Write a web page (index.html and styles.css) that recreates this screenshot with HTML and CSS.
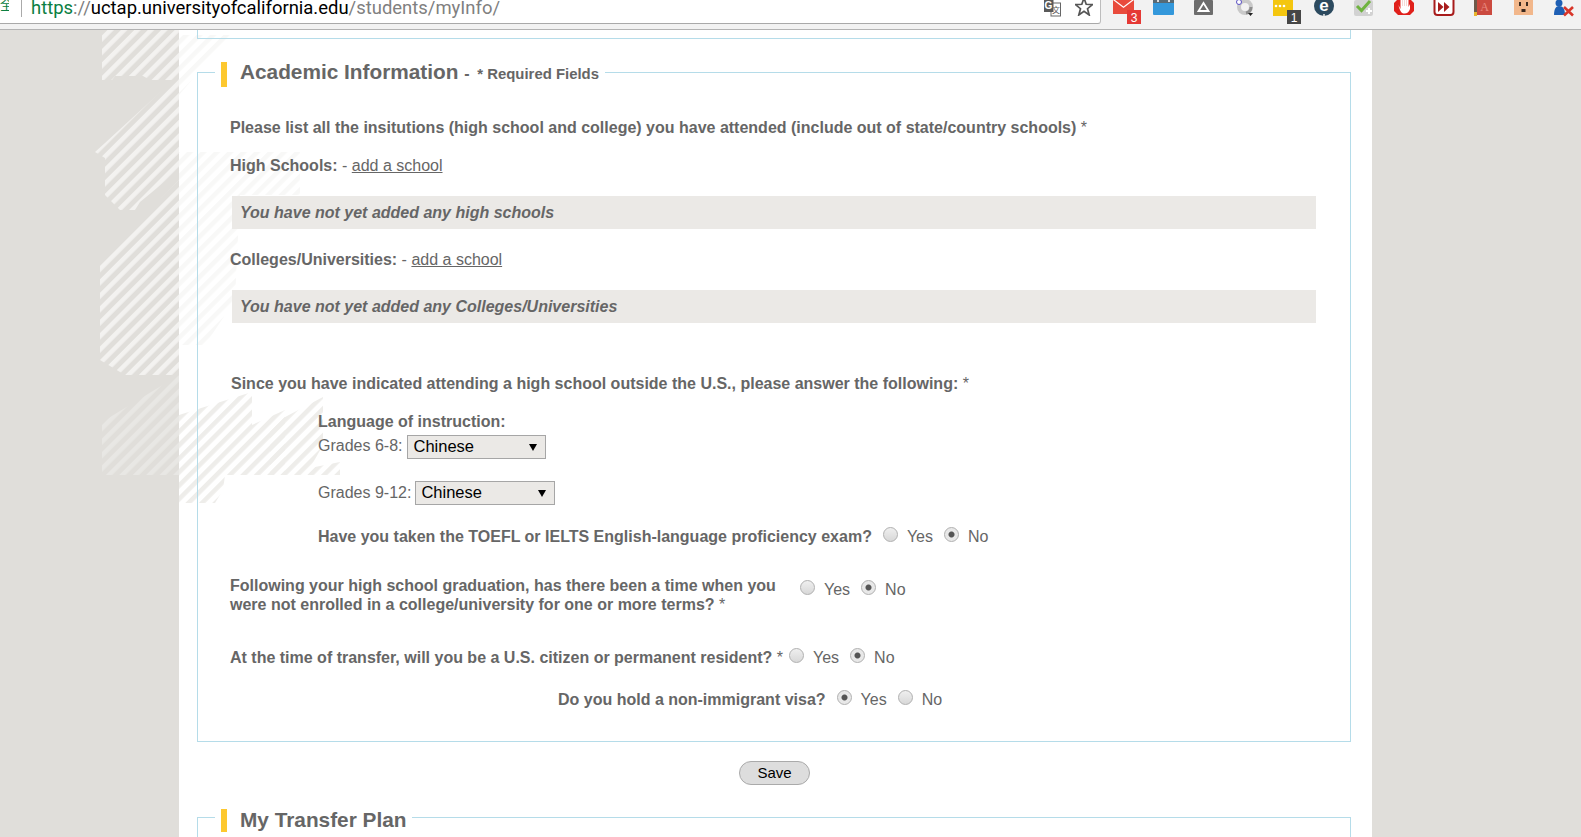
FILE: index.html
```html
<!DOCTYPE html>
<html lang="en">

<head>
    <meta charset="UTF-8">
    <title>My Information - UC TAP</title>
    <link rel="stylesheet" href="styles.css">
</head>

<body>
    <div class="toolbar">
        <div class="address">
            <span class="secure">全</span>
            <span class="divider"></span>
            <span class="url"><span class="scheme">https</span><span class="path">://</span><span class="host">uctap.universityofcalifornia.edu</span><span class="path">/students/myInfo/</span></span>
            <svg class="addr-icon translate" viewBox="0 0 18 17">
                <rect x="8" y="3" width="9.5" height="13" fill="#fff" stroke="#666"/>
                <text x="13" y="13" class="t-z">文</text>
                <path d="M1 0H10.500V12H1Z" fill="#5a5a5a"/>
                <text x="5.500" y="9" class="t-g">G</text>
            </svg>
            <svg class="addr-icon star" viewBox="0 0 18 16">
                <path d="M9 -2 11.200 4.300 17.500 4.600 12.500 8.700 14.200 15 9 11.400 3.800 15 5.500 8.700 0.500 4.600 6.800 4.300Z" fill="none" stroke="#555" stroke-width="1.700"/>
            </svg>
        </div>
        <div class="ext-icons">
            <svg class="ext" viewBox="0 0 40 29">
                <path d="M9 0H30V14H9Z" fill="#e94b3c"/>
                <path d="M9 0 19.500 8 30 0" fill="#fff"/>
                <path d="M11 0 19.500 6.500 28 0Z" fill="#e94b3c"/>
                <rect x="23" y="10" width="14" height="14" fill="#e53935"/>
                <text x="30" y="22" class="t-badge">3</text>
            </svg>
            <svg class="ext" viewBox="0 0 40 29">
                <rect x="9" y="0" width="21" height="15" rx="1" fill="#3498db"/>
                <rect x="9" y="0" width="21" height="3" fill="#566a76"/>
                <rect x="13" y="0" width="2" height="2" fill="#ddd"/>
                <rect x="24" y="0" width="2" height="2" fill="#ddd"/>
            </svg>
            <svg class="ext" viewBox="0 0 40 29">
                <rect x="10" y="0" width="19" height="15" rx="1" fill="#6d6d6d"/>
                <path d="M19.500 3 24.500 11H14.500Z" fill="none" stroke="#fff" stroke-width="1.800"/>
            </svg>
            <svg class="ext" viewBox="0 0 40 29">
                <circle cx="21" cy="7" r="6" fill="none" stroke="#c9c9c9" stroke-width="4"/>
                <path d="M22 13A6 6 0 0 0 27 7" fill="none" stroke="#8d8d8d" stroke-width="3"/>
                <circle cx="15" cy="2" r="2.500" fill="#fff" stroke="#5a4fc4"/>
                <path d="M24 13H29L26.500 16Z" fill="#222"/>
            </svg>
            <svg class="ext" viewBox="0 0 40 29">
                <rect x="9" y="0" width="20" height="16" fill="#f4c60f"/>
                <circle cx="12" cy="6" r="1.300" fill="#fff"/>
                <circle cx="16" cy="6" r="1.300" fill="#fff"/>
                <circle cx="20" cy="6" r="1.300" fill="#fff"/>
                <rect x="23" y="10" width="14" height="14" fill="#464646"/>
                <text x="30" y="22" class="t-badge">1</text>
            </svg>
            <svg class="ext" viewBox="0 0 40 29">
                <circle cx="20" cy="6" r="10" fill="#2c4a5f"/>
                <path d="M20 14V17" stroke="#f2f2f2" stroke-width="1.500"/>
                <text x="20" y="11" class="t-e">e</text>
            </svg>
            <svg class="ext" viewBox="0 0 40 29">
                <rect x="10" y="0" width="19" height="16" rx="2" fill="#d2d2d2"/>
                <path d="M13 6 17.500 10.500 26 1" fill="none" stroke="#6fb33f" stroke-width="3"/>
                <path d="M25 8V14M22 11H28" stroke="#fff" stroke-width="2"/>
            </svg>
            <svg class="ext" viewBox="0 0 40 29">
                <path d="M14 -1H26L30 3V11L26 15H14L10 11V3Z" fill="#e0201b"/>
                <path d="M14.500 5 16.500 9V0H24.500V7L26 4 26 9C25 12 23 13.500 20.500 13.500 18 13.500 16 12 14.500 5Z" fill="#fff"/>
                <path d="M18.500 0V6M20.500 0V6M22.500 0V6" stroke="#f0c8c4" stroke-width="0.700"/>
            </svg>
            <svg class="ext" viewBox="0 0 40 29">
                <rect x="10.500" y="-3" width="19" height="18" rx="3" fill="#fff" stroke="#a81c1c" stroke-width="2"/>
                <path d="M14 2 19.500 7 14 12ZM20 2 25.500 7 20 12Z" fill="#a81c1c"/>
            </svg>
            <svg class="ext" viewBox="0 0 40 29">
                <rect x="10" y="0" width="18" height="15" fill="#cb4a3f"/>
                <rect x="10" y="0" width="3" height="15" fill="#6e5a4a"/>
                <rect x="10" y="12" width="3" height="4" fill="#e8b52c"/>
                <text x="20.500" y="11" class="t-a">A</text>
            </svg>
            <svg class="ext" viewBox="0 0 40 29">
                <rect x="10" y="0" width="19" height="15" fill="#f2b78b"/>
                <rect x="15" y="2" width="2" height="4" fill="#3a2a20"/>
                <rect x="22" y="2" width="2" height="4" fill="#3a2a20"/>
                <rect x="17.500" y="9" width="4" height="3" fill="#3a2a20"/>
            </svg>
            <svg class="ext" viewBox="0 0 40 29">
                <circle cx="15" cy="3" r="3.500" fill="#1e5fb4"/>
                <path d="M10 15C10 9 12 6 15 6 19 6 21 9 21 15Z" fill="#1e5fb4"/>
                <path d="M20 7 29 15.500M29 7 20 15.500" stroke="#d8362a" stroke-width="2.600"/>
            </svg>
        </div>
    </div>

    <svg class="map-stripes" viewBox="0 0 400 500" width="400" height="500">
        <defs>
            <pattern id="stripesDark" width="9.500" height="9.500" patternUnits="userSpaceOnUse" patternTransform="rotate(45)">
                <rect width="4.500" height="9.500" fill="#f3f2f0"/>
            </pattern>
            <pattern id="stripesPale" width="9.500" height="9.500" patternUnits="userSpaceOnUse" patternTransform="rotate(45)">
                <rect width="4.500" height="9.500" fill="#f8f8f7"/>
            </pattern>
            <pattern id="stripesLow" width="9.500" height="9.500" patternUnits="userSpaceOnUse" patternTransform="rotate(45)">
                <rect width="4.500" height="9.500" fill="#eeedea"/>
            </pattern>
            <pattern id="stripesLowDark" width="9.500" height="9.500" patternUnits="userSpaceOnUse" patternTransform="rotate(45)">
                <rect width="4.500" height="9.500" fill="#eae9e6"/>
            </pattern>
        </defs>
        <!-- on the grey page, coords are page y minus 30 -->
        <path d="M102 0H179V50H150L143 46H115L112 50H102Z" fill="url(#stripesDark)"/>
        <path d="M179 45 105 113 95 122 105 128V165L120 180H135L140 172 179 140Z" fill="url(#stripesDark)"/>
        <path d="M179 150 100 232V330L125 345 H179Z" fill="url(#stripesDark)"/>
        <path d="M179 345 102 392 V445 H179Z" fill="url(#stripesLowDark)" opacity="0.8"/>
        <!-- on the white column -->
        <path d="M179 5H230L179 65Z" fill="url(#stripesPale)"/>
        <path d="M179 122H300V165H240L235 270 205 315H179Z" fill="url(#stripesPale)"/>
        <path d="M179 385 252 362V445H225L223 460 215 473H179Z" fill="url(#stripesLow)"/>
        <path d="M252 395 285 380V445H252Z" fill="url(#stripesLow)"/>
        <path d="M270 395 323 367V415L310 438 340 432V445H270Z" fill="url(#stripesLow)"/>
    </svg>

    <div class="column">
        <div class="prev-box"></div>

        <fieldset class="section">
            <legend><span class="legend-bar">Academic Information <span class="dash">-</span> <span class="required">* Required Fields</span></span></legend>

            <p class="line first"><b>Please list all the insitutions (high school and college) you have attended (include out of state/country schools)</b> *</p>

            <p class="line schools"><b>High Schools:</b> - <a href="#">add a school</a></p>
            <div class="empty-note">You have not yet added any high schools</div>

            <p class="line colleges"><b>Colleges/Universities:</b> - <a href="#">add a school</a></p>
            <div class="empty-note">You have not yet added any Colleges/Universities</div>

            <p class="line since"><b>Since you have indicated attending a high school outside the U.S., please answer the following:</b> *</p>

            <div class="indented">
                <p class="line lang"><b>Language of instruction:</b></p>
                <div class="grade-row first-grade">
                    <label>Grades 6-8:</label>
                    <span class="select-wrap w139"><select><option>Chinese</option></select></span>
                </div>
                <div class="grade-row second-grade">
                    <label>Grades 9-12:</label>
                    <span class="select-wrap w140"><select><option>Chinese</option></select></span>
                </div>
                <div class="radio-line toefl">
                    <b>Have you taken the TOEFL or IELTS English-language proficiency exam?</b>
                    <span class="opts"><input type="radio" name="toefl"><label>Yes</label><input type="radio" name="toefl" checked><label>No</label></span>
                </div>
            </div>

            <div class="radio-line gap-line">
                <b class="two-line">Following your high school graduation, has there been a time when you were not enrolled in a college/university for one or more terms? <span class="star-plain">*</span></b>
                <span class="opts"><input type="radio" name="gap"><label>Yes</label><input type="radio" name="gap" checked><label>No</label></span>
            </div>

            <div class="radio-line citizen">
                <span><b>At the time of transfer, will you be a U.S. citizen or permanent resident?</b> *</span>
                <span class="opts"><input type="radio" name="citizen"><label>Yes</label><input type="radio" name="citizen" checked><label>No</label></span>
            </div>

            <div class="radio-line visa">
                <b>Do you hold a non-immigrant visa?</b>
                <span class="opts"><input type="radio" name="visa" checked><label>Yes</label><input type="radio" name="visa"><label>No</label></span>
            </div>
        </fieldset>

        <div class="save-row"><button type="button" class="save">Save</button></div>

        <fieldset class="section next">
            <legend><span class="legend-bar">My Transfer Plan</span></legend>
        </fieldset>
    </div>
</body>
</html>
```

FILE: styles.css
```css
html, body {
    margin: 0;
    padding: 0;
    height: 100%;
    overflow: hidden;
}

body {
    background-color: #e0deda;
    font-family: "Liberation Sans", Arial, sans-serif;
    font-size: 16px;
    color: #666;
    position: relative;
}

/* browser chrome */
.toolbar {
    display: flex;
    height: 29px;
    background-color: #f2f2f2;
    border-bottom: 1px solid #b3b3b3;
    overflow: hidden;
}

.address {
    flex: 0 0 1100px;
    height: 23px;
    display: flex;
    align-items: flex-start;
    background-color: #fff;
    border-right: 1px solid #bdbdbd;
    border-bottom: 1px solid #a9a9a9;
    border-bottom-right-radius: 3px;
    overflow: hidden;
}

.secure {
    width: 9px;
    margin-top: -5px;
    overflow: hidden;
    font-family: "Noto Sans CJK SC", sans-serif;
    font-size: 13px;
    line-height: 18px;
    color: #0b8043;
}

.divider {
    width: 1px;
    height: 17px;
    margin-left: 12px;
    background-color: #aaa;
}

.url {
    margin-left: 9px;
    margin-top: -5px;
    font-family: Roboto, sans-serif;
    font-size: 18.450px;
    line-height: 26px;
    white-space: nowrap;
    color: #000;
}

.scheme {
    color: #0b8043;
}

.path {
    color: #808080;
}

.addr-icon {
    flex: none;
}

.translate {
    width: 18px;
    height: 17px;
    margin-left: auto;
}

.star {
    width: 18px;
    height: 16px;
    margin-left: 14px;
    margin-right: 7px;
}

.ext-icons {
    display: flex;
    flex: none;
    margin-left: 3px;
}

.ext {
    width: 40px;
    height: 29px;
    flex: none;
}

.t-g, .t-z, .t-badge, .t-e, .t-a {
    text-anchor: middle;
}

.t-g {
    font: bold 10px "Liberation Sans", sans-serif;
    fill: #fff;
}

.t-z {
    font: 8px "Noto Sans CJK SC", sans-serif;
    fill: #555;
}

.t-badge {
    font: 12px "Liberation Sans", sans-serif;
    fill: #fff;
}

.t-e {
    font: bold 17px "Liberation Sans", sans-serif;
    fill: #fff;
}

.t-a {
    font: 12px "Liberation Serif", serif;
    fill: #e98a80;
}

/* decoration behind the form */
.map-stripes {
    position: absolute;
    top: 30px;
    left: 0;
    z-index: 1;
}

.column {
    position: relative;
    width: 1193px;
    height: 807px;
    margin-left: 179px;
    background-color: #fff;
}

.prev-box {
    position: relative;
    z-index: 2;
    height: 8px;
    margin: 0 21px 0 18px;
    border: 1px solid #b5dce9;
    border-top: 0;
}

.section {
    margin: 19px 21px 0 18px;
    padding: 0 33px 31px 32px;
    border: 1px solid #b5dce9;
    min-width: 0;
    position: relative;
    z-index: 2;
}

.section legend {
    margin-left: -15px;
    padding: 4px 6px 0;
}

.legend-bar {
    display: block;
    height: 25px;
    padding-left: 13px;
    border-left: 6px solid #fdc82f;
    font-size: 20.800px;
    font-weight: bold;
    line-height: 19px;
}

.dash {
    font-size: 16px;
}

.required {
    margin-left: 2px;
    font-size: 14.900px;
}

.line {
    margin: 0;
    line-height: 20px;
}

.first {
    margin-top: 31px;
}

.schools {
    margin-top: 18px;
}

.colleges {
    margin-top: 21px;
}

.since {
    margin-top: 51px;
    margin-left: 1px;
}

a {
    color: #666;
}

.empty-note {
    height: 33px;
    margin: 20px 1px 0 2px;
    padding-left: 8px;
    background-color: #ebe9e6;
    font-weight: bold;
    font-style: italic;
    line-height: 33px;
    position: relative;
}

.indented {
    margin-left: 88px;
}

.lang {
    margin-top: 18px;
}

.grade-row {
    display: flex;
    align-items: flex-start;
    height: 24px;
    line-height: 20px;
}

.first-grade {
    margin-top: 3px;
}

.first-grade label {
    margin-top: 1px;
}

.second-grade {
    margin-top: 22px;
}

.second-grade label {
    margin-top: 2px;
}

.select-wrap {
    position: relative;
    display: block;
    margin-left: 5px;
}

.second-grade .select-wrap {
    margin-left: 4px;
}

.w139 {
    width: 139px;
}

.w140 {
    width: 140px;
}

.select-wrap::after {
    content: "";
    position: absolute;
    top: 9px;
    right: 9px;
    border-top: 7px solid #000;
    border-left: 4px solid transparent;
    border-right: 4px solid transparent;
}

select {
    display: block;
    width: 100%;
    height: 24px;
    padding: 0 0 2px 5px;
    appearance: none;
    -webkit-appearance: none;
    background-color: #ebe9e6;
    border: 1px solid #a6a6a6;
    border-radius: 0;
    font-family: "Liberation Sans", Arial, sans-serif;
    font-size: 16.500px;
    color: #000;
}

.radio-line {
    display: flex;
    align-items: flex-start;
    line-height: 20px;
}

.toefl {
    margin-top: 22px;
}

.gap-line {
    margin-top: 29px;
}

.two-line {
    width: 570px;
    line-height: 19px;
}

.star-plain {
    font-weight: normal;
}

.citizen {
    margin-top: 34px;
}

.visa {
    margin-top: 22px;
    margin-left: 328px;
}

.opts {
    display: inline-flex;
    align-items: flex-start;
    margin-left: 11px;
}

.citizen .opts {
    margin-left: 6px;
}

.gap-line .opts {
    margin-left: 0;
    margin-top: 4px;
}

.opts label {
    margin-right: 11px;
}

input[type="radio"] {
    appearance: none;
    -webkit-appearance: none;
    width: 15px;
    height: 15px;
    margin: 0 9px 0 0;
    border: 1px solid #b0b0b0;
    border-radius: 50%;
    background: linear-gradient(#efefef, #d8d8d8);
    box-sizing: border-box;
}

input[type="radio"]:checked {
    background: radial-gradient(circle, #555 0, #555 2.500px, #e8e8e8 3.500px);
}

.save-row {
    display: flex;
    justify-content: center;
    margin-top: 19px;
    padding-right: 2px;
}

.save {
    width: 71px;
    height: 24px;
    padding: 0;
    background-color: #ddd;
    border: 1px solid #aaa;
    border-radius: 12px;
    font-family: "Liberation Sans", Arial, sans-serif;
    font-size: 15px;
    line-height: 20px;
    color: #000;
}

.next {
    margin-top: 18px;
    height: 40px;
    padding-bottom: 0;
}

.next legend {
    padding-top: 6px;
}

.next .legend-bar {
    height: 23px;
    line-height: 21px;
}
```
